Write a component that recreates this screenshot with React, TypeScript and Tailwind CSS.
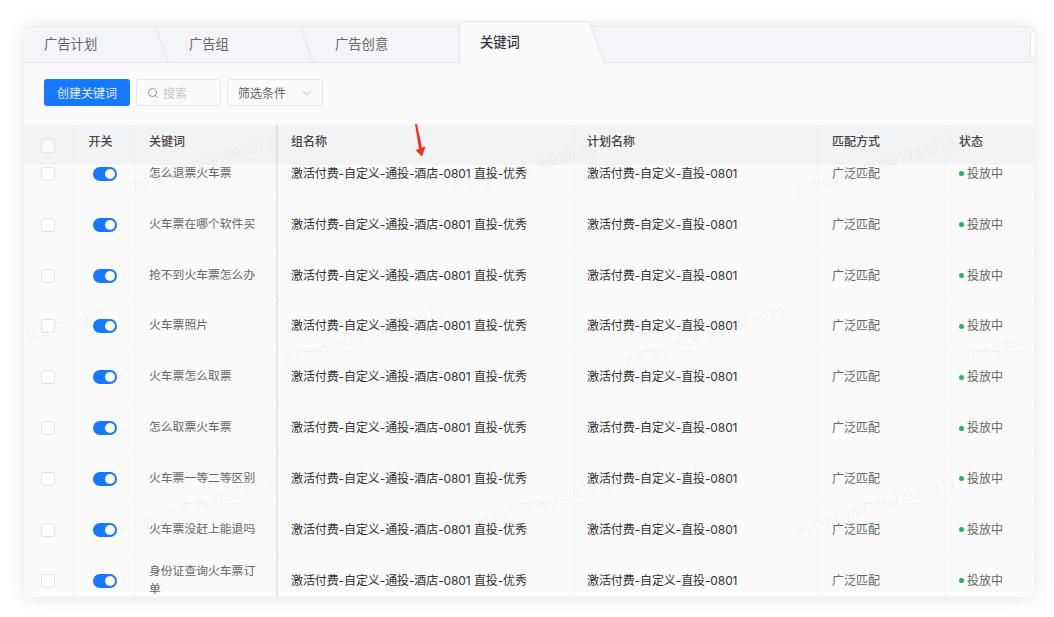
import { Search, ChevronDown } from 'lucide-react';

const rows = [
  '怎么退票火车票',
  '火车票在哪个软件买',
  '抢不到火车票怎么办',
  '火车票照片',
  '火车票怎么取票',
  '怎么取票火车票',
  '火车票一等二等区别',
  '火车票没赶上能退吗',
  '身份证查询火车票订单',
];

const GROUP = '激活付费-自定义-通投-酒店-0801 直投-优秀';
const PLAN = '激活付费-自定义-直投-0801';
const cols = 'grid grid-cols-[50px_62px_142px_296px_245px_126px_1fr]';
const fontStack = { fontFamily: 'Inter, "Noto Sans CJK SC", "Noto Sans", sans-serif' };

const bigMarks = [
  [113, 190], [453, 190], [794, 190],
  [283, 360], [624, 360],
  [113, 530], [453, 530], [794, 530],
];

const smallMarks: number[][] = [];
for (let y = 20; y < 520; y += 85) {
  for (let x = 10; x < 900; x += 85) {
    smallMarks.push([x, y]);
  }
}

const Slant = ({ left }: { left: number }) => (
  <svg className="absolute top-0" style={{ left }} width="14" height="36" viewBox="0 0 14 36">
    <path d="M0.5 0 L13 35" stroke="#e3e5ec" strokeWidth="1" fill="none" />
  </svg>
);

const Toggle = () => (
  <div className="w-6 h-3.5 rounded-full bg-[#1677ff] flex items-center justify-end pr-0.5">
    <div className="w-2.5 h-2.5 rounded-full bg-white" />
  </div>
);

const Check = () => <div className="w-3.5 h-3.5 rounded-[3px] border border-[#e3e4e8] bg-white/60" />;

const App = () => {
  return (
    <div className="w-[1054px] h-[617px] bg-white overflow-hidden pt-[21px] pl-6" style={fontStack}>
      <div className="relative w-[1010px] h-[576px]">
        <div className="absolute left-0 right-0 top-[5px] bottom-0 rounded-t-md rounded-b-[10px] shadow-[0_2px_20px_rgba(0,0,0,0.11)]" />
        <div className="relative w-full h-full overflow-hidden rounded-b-[10px] flex flex-col">
          {/* tabs */}
          <div className="relative h-[42px] shrink-0 flex items-end">
            <div className="relative w-[435px] h-[37px] bg-[#f4f5f8] border-t border-[#e8e9ee] border-b border-b-[#e3e5ee] rounded-tl-md text-[13.3px] text-[#666]">
              <Slant left={131} />
              <Slant left={276} />
              <span className="absolute left-5 top-[8px]">广告计划</span>
              <span className="absolute left-[165px] top-[8px]">广告组</span>
              <span className="absolute left-[311px] top-[8px]">广告创意</span>
            </div>
            <div className="relative w-[131px] h-[42px] bg-[#fafafb] border-t border-l border-[#e3e5ee] rounded-tl-sm flex pl-5 pt-[11px] text-[13.3px] font-medium text-[#333]">
              关键词
            </div>
            <div className="relative flex-1 h-[37px] bg-[#f4f5f8] border-t border-[#e8e9ee] border-b border-b-[#e3e5ee] rounded-tr-md">
              <svg className="absolute -left-px -top-[6px]" width="16" height="43" viewBox="0 0 16 43">
                <path d="M0 0 L15 42 L0 42 Z" fill="#fafafb" />
                <path d="M0 0 L15 42" stroke="#e3e5ee" strokeWidth="1" fill="none" />
              </svg>
              <div className="absolute right-0 top-[4px] w-1 h-[27px] bg-white border border-r-0 border-[#e3e5ee] rounded-l-sm" />
            </div>
          </div>

          {/* toolbar */}
          <div className="h-[62px] shrink-0 bg-[#fafafb] flex items-center gap-1.5 pl-5 pb-[3px] text-xs">
            <button className="w-[86px] h-[27px] rounded-[3px] bg-[#1677ff] text-white/90 pt-[2px]">创建关键词</button>
            <div className="w-[85px] h-[27px] rounded-[3px] border border-[#e6e7ea] flex items-center gap-1 pl-[10px] text-[#c4c6cb]">
              <Search size={12} strokeWidth={1.5} className="text-[#777]" />
              <span className="pt-[2px]">搜索</span>
            </div>
            <div className="w-[96px] h-[27px] rounded-[3px] border border-[#e6e7ea] flex items-center justify-between pl-[10px] pr-[7px] text-[#666]">
              <span className="pt-[2px]">筛选条件</span>
              <ChevronDown size={16} strokeWidth={1.1} className="text-[#aaa]" />
            </div>
          </div>

          {/* table */}
          <div className="relative flex-1 overflow-hidden bg-[#fafafa] text-xs">
            <div className={`${cols} relative z-10 h-[40px] bg-[#f2f3f4] font-medium text-[#444]`}>
              <div className="flex items-center justify-center pr-[1px] pt-[2px] border-r border-[#eeeff0]"><Check /></div>
              <div className="flex items-center justify-center pb-[6px] pr-2 border-r border-[#eeeff0]">开关</div>
              <div className="flex items-center pb-[6px] pl-[13px] border-r-2 border-[#dfe0e2]">关键词</div>
              <div className="flex items-center pb-[6px] pl-[13px] border-r border-[#eeeff0]">组名称</div>
              <div className="flex items-center pb-[6px] pl-[13px] border-r border-[#eeeff0]">计划名称</div>
              <div className="flex items-center pb-[6px] pl-[13px] border-r border-[#eeeff0]">匹配方式</div>
              <div className="flex items-center pb-[6px] pl-[14px]">状态</div>
            </div>
            <div className="-mt-[16.5px]">
              {rows.map((kw) => (
                <div key={kw} className={`${cols} h-[50.85px] border-b border-[#f4f4f5]`}>
                  <div className="flex items-center justify-center pr-[1px] pt-[1px] border-r border-[#f4f4f5]"><Check /></div>
                  <div className="flex items-center justify-center pl-[1px] pt-[1px] border-r border-[#f4f4f5]"><Toggle /></div>
                  <div className="flex items-center pl-[13px] pr-[12px] pb-[1px] text-[11.8px] leading-[18px] text-[#666] border-r-2 border-[#e6e7e8]">{kw}</div>
                  <div className="flex items-center pl-[13px] pt-[1px] tracking-[-0.1px] text-[#333] border-r border-[#f4f4f5]">{GROUP}</div>
                  <div className="flex items-center pl-[13px] pt-[1px] tracking-[-0.1px] text-[#333] border-r border-[#f4f4f5]">{PLAN}</div>
                  <div className="flex items-center pl-[13px] pt-[1px] text-[#666] border-r border-[#f4f4f5]">广泛匹配</div>
                  <div className="flex items-center pl-[14px] pt-[1px] text-[#666] gap-[3px]">
                    <span className="w-[5px] h-[5px] rounded-full bg-[#22b35e]" />
                    投放中
                  </div>
                </div>
              ))}
            </div>
          </div>

          {/* watermark */}
          <div className="absolute inset-0 z-20 pointer-events-none">
            {smallMarks.map(([x, y]) => (
              <span
                key={`${x}-${y}`}
                className="absolute text-[11px] whitespace-nowrap text-black/[0.025] origin-left rotate-[38deg]"
                style={{ left: x, top: y }}
              >
                2023/08/14 wangdan06
              </span>
            ))}
            {bigMarks.map(([x, y]) => (
              <span
                key={`${x}-${y}`}
                className="absolute text-[14.5px] whitespace-nowrap text-black/[0.05] origin-left -rotate-[16.5deg]"
                style={{ left: x - 24, top: y - 32 }}
              >
                wangdan06 1691985973
              </span>
            ))}
            <span className="absolute left-[2px] top-[305px] text-[14.5px] whitespace-nowrap text-black/[0.05] origin-left -rotate-[16.5deg]">1691985973</span>
            <span className="absolute left-[940px] top-[325px] text-[14.5px] whitespace-nowrap text-black/[0.05] origin-left -rotate-[16.5deg]">wangdan</span>
          </div>

          {/* red arrow annotation */}
          <svg className="absolute z-30 left-[388px] top-[102px]" width="14" height="36" viewBox="0 0 14 36">
            <path d="M3 1 L5 1 L10 24.5 L13.5 23.5 L10 33.5 L3.5 27 L7 26 Z" fill="#f5301e" />
          </svg>
        </div>
      </div>
    </div>
  );
};

export default App;
